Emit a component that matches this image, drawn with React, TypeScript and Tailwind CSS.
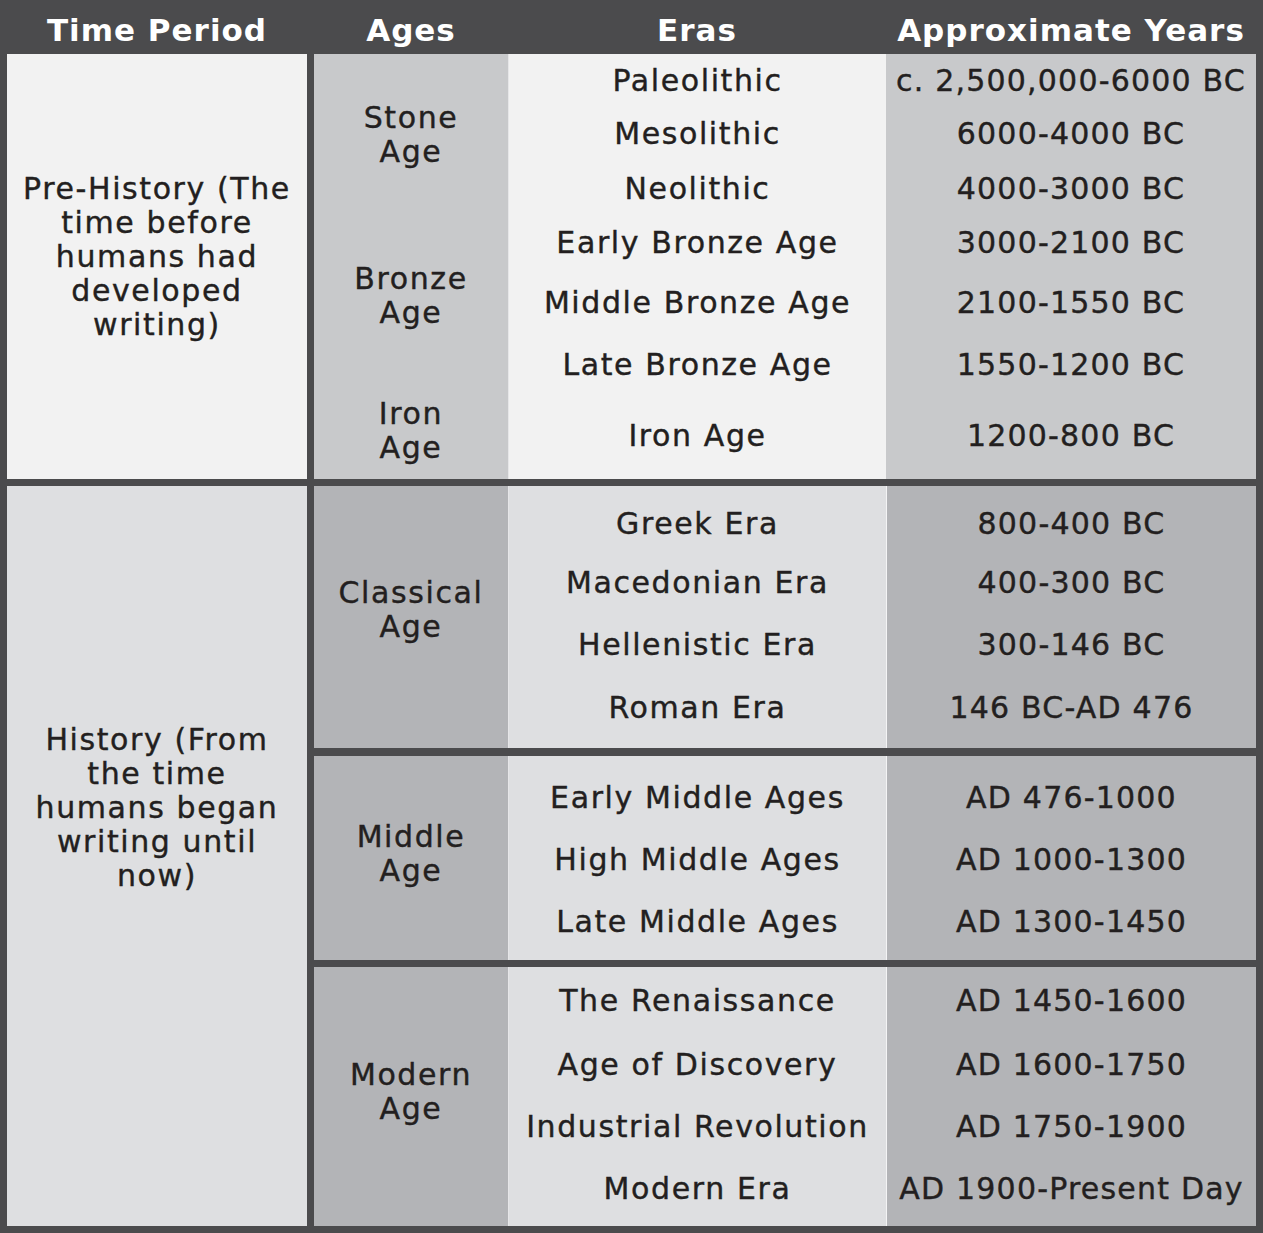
type Row = { era: string; years: string; cls: string };

type Section = {
  age: { label: string[]; cls: string }[];
  rows: Row[];
  light: string;
  dark: string;
  cls: string;
};

const sections: Section[] = [
  {
    cls: "h-[425px]",
    light: "bg-[#f2f2f2]",
    dark: "bg-[#c8c9cb]",
    age: [
      { label: ["Stone", "Age"], cls: "h-[162px]" },
      { label: ["Bronze", "Age"], cls: "h-[176px] pb-[16px]" },
      { label: ["Iron", "Age"], cls: "h-[87px] pb-[10px]" },
    ],
    rows: [
      { era: "Paleolithic", years: "c. 2,500,000-6000 BC", cls: "h-[52px]" },
      { era: "Mesolithic", years: "6000-4000 BC", cls: "h-[54px]" },
      { era: "Neolithic", years: "4000-3000 BC", cls: "h-[56px]" },
      { era: "Early Bronze Age", years: "3000-2100 BC", cls: "h-[52px]" },
      { era: "Middle Bronze Age", years: "2100-1550 BC", cls: "h-[68px]" },
      { era: "Late Bronze Age", years: "1550-1200 BC", cls: "h-[56px]" },
      { era: "Iron Age", years: "1200-800 BC", cls: "h-[87px]" },
    ],
  },
  {
    cls: "h-[262px] mt-[7px]",
    light: "bg-[#dedfe1]",
    dark: "bg-[#b3b4b7]",
    age: [{ label: ["Classical", "Age"], cls: "h-[262px] pb-[14px]" }],
    rows: [
      { era: "Greek Era", years: "800-400 BC", cls: "h-[66px] pt-[8px]" },
      { era: "Macedonian Era", years: "400-300 BC", cls: "h-[60px]" },
      { era: "Hellenistic Era", years: "300-146 BC", cls: "h-[64px]" },
      { era: "Roman Era", years: "146 BC-AD 476", cls: "h-[72px] pb-[10px]" },
    ],
  },
  {
    cls: "h-[204px] mt-[8px]",
    light: "bg-[#dedfe1]",
    dark: "bg-[#b3b4b7]",
    age: [{ label: ["Middle", "Age"], cls: "h-[204px] pb-[8px]" }],
    rows: [
      { era: "Early Middle Ages", years: "AD 476-1000", cls: "h-[72px] pt-[10px]" },
      { era: "High Middle Ages", years: "AD 1000-1300", cls: "h-[62px]" },
      { era: "Late Middle Ages", years: "AD 1300-1450", cls: "h-[70px] pb-[8px]" },
    ],
  },
  {
    cls: "h-[259px] mt-[7px]",
    light: "bg-[#dedfe1]",
    dark: "bg-[#b3b4b7]",
    age: [{ label: ["Modern", "Age"], cls: "h-[259px] pb-[10px]" }],
    rows: [
      { era: "The Renaissance", years: "AD 1450-1600", cls: "h-[66px]" },
      { era: "Age of Discovery", years: "AD 1600-1750", cls: "h-[62px]" },
      { era: "Industrial Revolution", years: "AD 1750-1900", cls: "h-[62px]" },
      { era: "Modern Era", years: "AD 1900-Present Day", cls: "h-[69px] pb-[6px]" },
    ],
  },
];

function Lines({ lines }: { lines: string[] }) {
  return (
    <div className="text-center leading-[34px]">
      {lines.map((l) => (
        <div key={l}>{l}</div>
      ))}
    </div>
  );
}

export default function App() {
  return (
    <div className="w-[1263px] h-[1233px] bg-[#4b4b4d] px-[7px] pb-[7px] font-['DejaVu_Sans',sans-serif] text-[30px] tracking-[1.6px] text-[#231f20] [-webkit-text-stroke:0.4px_#231f20] whitespace-nowrap">
      {/* Header */}
      <div className="flex h-[54px] items-center pt-[6px] text-white font-bold text-[31px] tracking-[1px] [-webkit-text-stroke:0px]">
        <div className="w-[300px] text-center">Time Period</div>
        <div className="w-[7px]" />
        <div className="w-[194px] text-center">Ages</div>
        <div className="w-[378px] text-center">Eras</div>
        <div className="w-[370px] text-center">Approximate Years</div>
      </div>

      <div className="flex gap-[7px]">
        {/* Time period column */}
        <div className="w-[300px] flex flex-col gap-[7px]">
          <div className="h-[425px] bg-[#f2f2f2] flex items-center justify-center pb-[20px]">
            <Lines lines={["Pre-History (The", "time before", "humans had", "developed", "writing)"]} />
          </div>
          <div className="h-[740px] bg-[#dedfe1] flex items-center justify-center pb-[96px]">
            <Lines lines={["History (From", "the time", "humans began", "writing until", "now)"]} />
          </div>
        </div>

        {/* Ages / eras / years */}
        <div className="flex flex-col w-[942px]">
          {sections.map((s, i) => (
            <div key={i} className={`flex ${s.cls}`}>
              <div className={`w-[194px] flex flex-col ${s.dark}`}>
                {s.age.map((a) => (
                  <div key={a.label[0]} className={`flex items-center justify-center ${a.cls}`}>
                    <Lines lines={a.label} />
                  </div>
                ))}
              </div>
              <div className={`w-[378px] flex flex-col border-l border-[#e6e6e8] ${s.light}`}>
                {s.rows.map((r) => (
                  <div key={r.era} className={`flex items-center justify-center ${r.cls}`}>
                    {r.era}
                  </div>
                ))}
              </div>
              <div className={`w-[370px] flex flex-col tracking-[1.2px] ${i > 0 ? "border-l border-[#f4f4f5]" : ""} ${s.dark}`}>
                {s.rows.map((r) => (
                  <div key={r.years} className={`flex items-center justify-center ${r.cls}`}>
                    {r.years}
                  </div>
                ))}
              </div>
            </div>
          ))}
        </div>
      </div>
    </div>
  );
}
